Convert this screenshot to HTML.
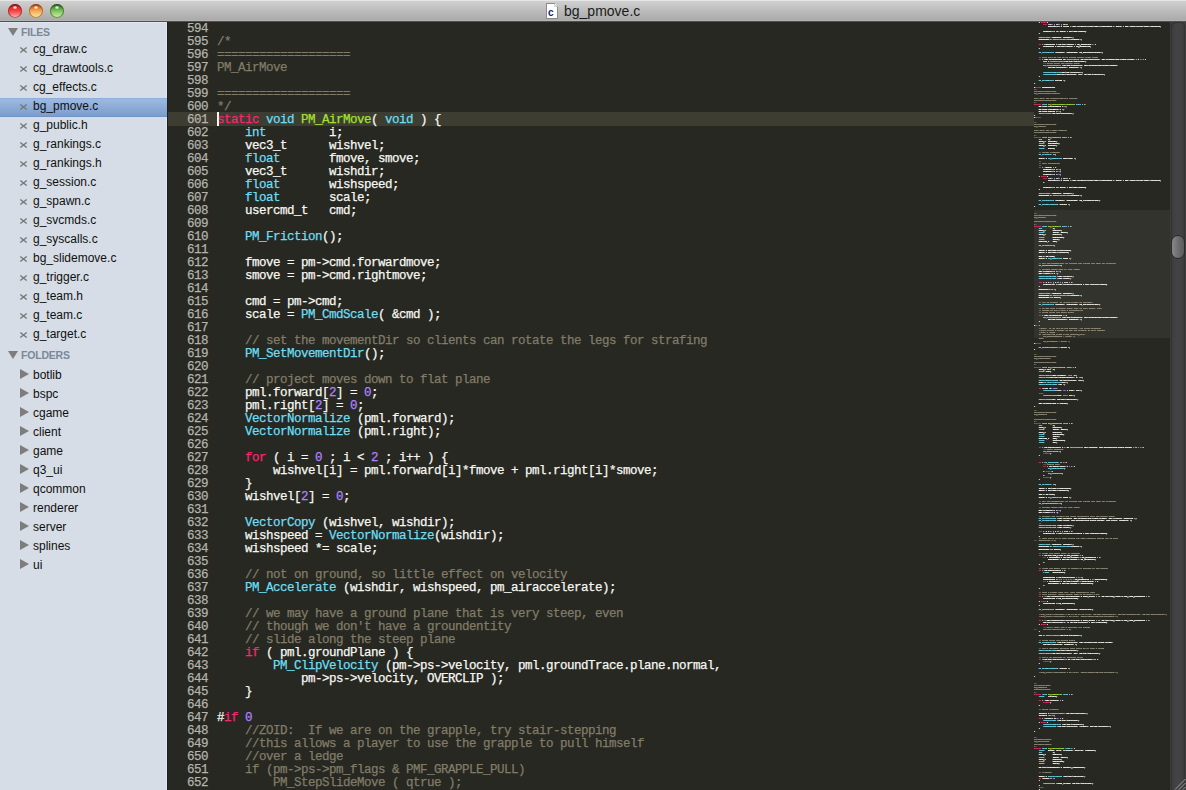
<!DOCTYPE html>
<html><head><meta charset="utf-8">
<style>
*{margin:0;padding:0;box-sizing:border-box}
html,body{width:1186px;height:790px;overflow:hidden;background:#272822}
body{position:relative;font-family:"Liberation Sans",sans-serif}
#title{position:absolute;left:0;top:0;width:1186px;height:22px;
 background:linear-gradient(#e6e6e6 0px,#e6e6e6 1px,#d0d0d0 1px,#aaaaaa 20px,#b3b3b3 20px,#b3b3b3 21px,#505050 21px,#505050 22px)}
.tl{position:absolute;top:4px;width:14px;height:14px;border-radius:50%}
#t-r{left:8px;background:linear-gradient(#7a1414 0,#d42a2a 22%,#f53c3c 45%,#f87070 70%,#ffc4c4 100%);box-shadow:inset 0 0 0 1px rgba(110,20,20,0.55)}
#t-y{left:29px;background:linear-gradient(#9a3a10 0,#d86a28 22%,#f3a050 45%,#f8c878 70%,#ffe99a 100%);box-shadow:inset 0 0 0 1px rgba(130,60,10,0.55)}
#t-g{left:50px;background:linear-gradient(#245a18 0,#4a9034 22%,#78bc5a 45%,#a4d880 70%,#d4f0a4 100%);box-shadow:inset 0 0 0 1px rgba(30,70,20,0.55)}
.tl::after{content:"";position:absolute;left:5px;top:1.5px;width:4px;height:3px;border-radius:50%;background:radial-gradient(rgba(255,255,255,0.95),rgba(255,255,255,0.3))}
#ttext{position:absolute;left:564px;top:3px;font-size:14px;color:#1a1a1a;letter-spacing:0px}
#ticon{position:absolute;left:546px;top:3px;width:12px;height:16px;background:#fff;border:1px solid #8a8a8a;clip-path:polygon(0 0,70% 0,100% 25%,100% 100%,0 100%)}
#ticon::after{content:"";position:absolute;right:-1px;top:-1px;width:4px;height:4px;background:linear-gradient(225deg,transparent 50%,#9a9a9a 50%,#e0e0e0 70%)}
#ticon b{position:absolute;left:1px;top:3px;font:bold 10px "Liberation Sans",sans-serif;color:#14207a}
#side{position:absolute;left:0;top:22px;width:168px;height:768px;background:#d6dde6;border-top:1px solid #e2e7ee}
#side::after{content:"";position:absolute;right:0;top:-1px;width:1px;height:769px;background:#1e1e1a}
#side::before{content:"";position:absolute;right:1px;top:0;width:1px;height:768px;background:#e0e6ee}
.hd{position:absolute;left:21px;font:bold 10.5px "Liberation Sans",sans-serif;color:#7b8898;letter-spacing:-0.2px}
.tri{position:absolute;left:8px;width:0;height:0;border-left:5px solid transparent;border-right:5px solid transparent;border-top:8px solid #7d7d7d}
.it{position:absolute;left:33px;font-size:12px;color:#101010;height:19px;line-height:19px}
.xs{position:absolute;left:19px}
.x{position:absolute;left:19px;font-size:14px;color:#6a6a6a;line-height:19px}
.ft{position:absolute;left:20px;width:0;height:0;border-top:5px solid transparent;border-bottom:5px solid transparent;border-left:9px solid #7d7d7d}
.sel{position:absolute;left:0;top:98px;width:167px;height:19px;background:linear-gradient(#9cb9e0,#7c9dcd);border-top:1px solid #8eaedb;border-bottom:1px solid #6f93c6}
#ed{position:absolute;left:168px;top:22px;width:1018px;height:768px;background:#272822;overflow:hidden}
#hl{position:absolute;left:168px;top:112px;width:866px;height:14px;background:#3e3d32}
#caret{position:absolute;left:217px;top:112px;width:2px;height:14px;background:#f8f8f0}
.ln,.no{position:absolute;height:13px;line-height:13px;white-space:pre;font-family:"Liberation Mono",monospace;font-size:12.5px;letter-spacing:-0.5px;color:#f8f8f2;-webkit-text-stroke:0.25px currentColor}
.ln{left:217px}
.no{left:167px;width:41px;text-align:right;color:#b4b4ac}
.cm{color:#827c67}.kw{color:#f92672}.ty{color:#6cdff4}.fn{color:#a6e22e}.call{color:#6cdff4}.num{color:#ae81ff}
#mmv{position:absolute;left:1034px;top:210px;width:136px;height:128px;background:#33332d}
#mm i{position:absolute;height:1.6px;opacity:0.55;background:#f8f8f2}
#mm i.cm{background:#75715e}#mm i.kw{background:#f92672}#mm i.ty,#mm i.call{background:#66d9ef}#mm i.fn{background:#a6e22e}#mm i.num{background:#ae81ff}
#mmclip{position:absolute;left:1034px;top:22px;width:136px;height:768px;overflow:hidden}
#mmt{position:absolute;left:0;top:187.5px;width:900px;height:0;transform:scale(0.16667);transform-origin:0 0}
.mln{position:absolute;left:0;height:13px;line-height:13px;white-space:pre;font-family:"Liberation Mono",monospace;font-size:12.5px;letter-spacing:-0.5px;color:#f8f8f2;font-weight:bold;-webkit-text-stroke:1.2px currentColor}
.mln .cm{color:#9a9480}
#sb{position:absolute;left:1170px;top:22px;width:16px;height:768px;background:linear-gradient(90deg,#3a3a3a,#444 50%,#3e3e3e)}
#groove{position:absolute;left:1171px;top:22px;width:14px;height:772px;border-radius:5px 5px 0 0;background:linear-gradient(90deg,#3c3c3c,#434343 40%,#424242 70%,#3a3a3a);box-shadow:inset 1px 1px 0 #333,inset -1px 0 0 #333}
#thumb{position:absolute;left:1171px;top:235px;width:14px;height:24px;border-radius:7px;background:linear-gradient(90deg,#888,#6a6a6a 60%,#5a5a5a);border:1px solid #2a2a2a}
</style></head><body>
<div id="title">
 <div class="tl" id="t-r"></div><div class="tl" id="t-y"></div><div class="tl" id="t-g"></div>
 <div id="ticon"><b>c</b></div>
 <div id="ttext">bg_pmove.c</div>
</div>
<div id="side">
</div>
<div class="sel"></div>
<div id="sideitems">
<div class="tri" style="top:28px"></div><div class="hd" style="top:26px">FILES</div>
<svg class="xs" style="top:46px" width="9" height="8"><path d="M1.3 1.5L7.7 6.5M7.7 1.5L1.3 6.5" stroke="#777" stroke-width="1.4"/></svg><div class="it" style="top:40px">cg_draw.c</div>
<svg class="xs" style="top:65px" width="9" height="8"><path d="M1.3 1.5L7.7 6.5M7.7 1.5L1.3 6.5" stroke="#777" stroke-width="1.4"/></svg><div class="it" style="top:59px">cg_drawtools.c</div>
<svg class="xs" style="top:84px" width="9" height="8"><path d="M1.3 1.5L7.7 6.5M7.7 1.5L1.3 6.5" stroke="#777" stroke-width="1.4"/></svg><div class="it" style="top:78px">cg_effects.c</div>
<svg class="xs" style="top:103px" width="9" height="8"><path d="M1.3 1.5L7.7 6.5M7.7 1.5L1.3 6.5" stroke="#777" stroke-width="1.4"/></svg><div class="it" style="top:97px">bg_pmove.c</div>
<svg class="xs" style="top:122px" width="9" height="8"><path d="M1.3 1.5L7.7 6.5M7.7 1.5L1.3 6.5" stroke="#777" stroke-width="1.4"/></svg><div class="it" style="top:116px">g_public.h</div>
<svg class="xs" style="top:141px" width="9" height="8"><path d="M1.3 1.5L7.7 6.5M7.7 1.5L1.3 6.5" stroke="#777" stroke-width="1.4"/></svg><div class="it" style="top:135px">g_rankings.c</div>
<svg class="xs" style="top:160px" width="9" height="8"><path d="M1.3 1.5L7.7 6.5M7.7 1.5L1.3 6.5" stroke="#777" stroke-width="1.4"/></svg><div class="it" style="top:154px">g_rankings.h</div>
<svg class="xs" style="top:179px" width="9" height="8"><path d="M1.3 1.5L7.7 6.5M7.7 1.5L1.3 6.5" stroke="#777" stroke-width="1.4"/></svg><div class="it" style="top:173px">g_session.c</div>
<svg class="xs" style="top:198px" width="9" height="8"><path d="M1.3 1.5L7.7 6.5M7.7 1.5L1.3 6.5" stroke="#777" stroke-width="1.4"/></svg><div class="it" style="top:192px">g_spawn.c</div>
<svg class="xs" style="top:217px" width="9" height="8"><path d="M1.3 1.5L7.7 6.5M7.7 1.5L1.3 6.5" stroke="#777" stroke-width="1.4"/></svg><div class="it" style="top:211px">g_svcmds.c</div>
<svg class="xs" style="top:236px" width="9" height="8"><path d="M1.3 1.5L7.7 6.5M7.7 1.5L1.3 6.5" stroke="#777" stroke-width="1.4"/></svg><div class="it" style="top:230px">g_syscalls.c</div>
<svg class="xs" style="top:255px" width="9" height="8"><path d="M1.3 1.5L7.7 6.5M7.7 1.5L1.3 6.5" stroke="#777" stroke-width="1.4"/></svg><div class="it" style="top:249px">bg_slidemove.c</div>
<svg class="xs" style="top:274px" width="9" height="8"><path d="M1.3 1.5L7.7 6.5M7.7 1.5L1.3 6.5" stroke="#777" stroke-width="1.4"/></svg><div class="it" style="top:268px">g_trigger.c</div>
<svg class="xs" style="top:293px" width="9" height="8"><path d="M1.3 1.5L7.7 6.5M7.7 1.5L1.3 6.5" stroke="#777" stroke-width="1.4"/></svg><div class="it" style="top:287px">g_team.h</div>
<svg class="xs" style="top:312px" width="9" height="8"><path d="M1.3 1.5L7.7 6.5M7.7 1.5L1.3 6.5" stroke="#777" stroke-width="1.4"/></svg><div class="it" style="top:306px">g_team.c</div>
<svg class="xs" style="top:331px" width="9" height="8"><path d="M1.3 1.5L7.7 6.5M7.7 1.5L1.3 6.5" stroke="#777" stroke-width="1.4"/></svg><div class="it" style="top:325px">g_target.c</div>
<div class="tri" style="top:351px"></div><div class="hd" style="top:349px">FOLDERS</div>
<div class="ft" style="top:369px"></div><div class="it" style="top:366px">botlib</div>
<div class="ft" style="top:388px"></div><div class="it" style="top:385px">bspc</div>
<div class="ft" style="top:407px"></div><div class="it" style="top:404px">cgame</div>
<div class="ft" style="top:426px"></div><div class="it" style="top:423px">client</div>
<div class="ft" style="top:445px"></div><div class="it" style="top:442px">game</div>
<div class="ft" style="top:464px"></div><div class="it" style="top:461px">q3_ui</div>
<div class="ft" style="top:483px"></div><div class="it" style="top:480px">qcommon</div>
<div class="ft" style="top:502px"></div><div class="it" style="top:499px">renderer</div>
<div class="ft" style="top:521px"></div><div class="it" style="top:518px">server</div>
<div class="ft" style="top:540px"></div><div class="it" style="top:537px">splines</div>
<div class="ft" style="top:559px"></div><div class="it" style="top:556px">ui</div>
</div>
<div id="ed"></div>
<div id="mmv"></div>
<div id="hl"></div>
<div id="code">
<div class="no" style="top:23px">594</div>
<div class="no" style="top:36px">595</div>
<div class="no" style="top:49px">596</div>
<div class="no" style="top:62px">597</div>
<div class="no" style="top:75px">598</div>
<div class="no" style="top:88px">599</div>
<div class="no" style="top:101px">600</div>
<div class="no" style="top:114px">601</div>
<div class="no" style="top:127px">602</div>
<div class="no" style="top:140px">603</div>
<div class="no" style="top:153px">604</div>
<div class="no" style="top:166px">605</div>
<div class="no" style="top:179px">606</div>
<div class="no" style="top:192px">607</div>
<div class="no" style="top:205px">608</div>
<div class="no" style="top:218px">609</div>
<div class="no" style="top:231px">610</div>
<div class="no" style="top:244px">611</div>
<div class="no" style="top:257px">612</div>
<div class="no" style="top:270px">613</div>
<div class="no" style="top:283px">614</div>
<div class="no" style="top:296px">615</div>
<div class="no" style="top:309px">616</div>
<div class="no" style="top:322px">617</div>
<div class="no" style="top:335px">618</div>
<div class="no" style="top:348px">619</div>
<div class="no" style="top:361px">620</div>
<div class="no" style="top:374px">621</div>
<div class="no" style="top:387px">622</div>
<div class="no" style="top:400px">623</div>
<div class="no" style="top:413px">624</div>
<div class="no" style="top:426px">625</div>
<div class="no" style="top:439px">626</div>
<div class="no" style="top:452px">627</div>
<div class="no" style="top:465px">628</div>
<div class="no" style="top:478px">629</div>
<div class="no" style="top:491px">630</div>
<div class="no" style="top:504px">631</div>
<div class="no" style="top:517px">632</div>
<div class="no" style="top:530px">633</div>
<div class="no" style="top:543px">634</div>
<div class="no" style="top:556px">635</div>
<div class="no" style="top:569px">636</div>
<div class="no" style="top:582px">637</div>
<div class="no" style="top:595px">638</div>
<div class="no" style="top:608px">639</div>
<div class="no" style="top:621px">640</div>
<div class="no" style="top:634px">641</div>
<div class="no" style="top:647px">642</div>
<div class="no" style="top:660px">643</div>
<div class="no" style="top:673px">644</div>
<div class="no" style="top:686px">645</div>
<div class="no" style="top:699px">646</div>
<div class="no" style="top:712px">647</div>
<div class="no" style="top:725px">648</div>
<div class="no" style="top:738px">649</div>
<div class="no" style="top:751px">650</div>
<div class="no" style="top:764px">651</div>
<div class="no" style="top:777px">652</div>
<div class="no" style="top:790px">653</div>
<div class="ln" style="top:23px"></div>
<div class="ln" style="top:36px"><span class="cm">/*</span></div>
<div class="ln" style="top:49px"><span class="cm">===================</span></div>
<div class="ln" style="top:62px"><span class="cm">PM_AirMove</span></div>
<div class="ln" style="top:75px"></div>
<div class="ln" style="top:88px"><span class="cm">===================</span></div>
<div class="ln" style="top:101px"><span class="cm">*/</span></div>
<div class="ln" style="top:114px"><span class="kw">static </span><span class="ty">void </span><span class="fn">PM_AirMove</span>( <span class="ty">void </span>) {</div>
<div class="ln" style="top:127px">    <span class="ty">int         </span>i;</div>
<div class="ln" style="top:140px">    vec3_t      wishvel;</div>
<div class="ln" style="top:153px">    <span class="ty">float       </span>fmove, smove;</div>
<div class="ln" style="top:166px">    vec3_t      wishdir;</div>
<div class="ln" style="top:179px">    <span class="ty">float       </span>wishspeed;</div>
<div class="ln" style="top:192px">    <span class="ty">float       </span>scale;</div>
<div class="ln" style="top:205px">    usercmd_t   cmd;</div>
<div class="ln" style="top:218px"></div>
<div class="ln" style="top:231px">    <span class="call">PM_Friction</span>();</div>
<div class="ln" style="top:244px"></div>
<div class="ln" style="top:257px">    fmove = pm-&gt;cmd.forwardmove;</div>
<div class="ln" style="top:270px">    smove = pm-&gt;cmd.rightmove;</div>
<div class="ln" style="top:283px"></div>
<div class="ln" style="top:296px">    cmd = pm-&gt;cmd;</div>
<div class="ln" style="top:309px">    scale = <span class="call">PM_CmdScale</span>( &amp;cmd );</div>
<div class="ln" style="top:322px"></div>
<div class="ln" style="top:335px">    <span class="cm">// set the movementDir so clients can rotate the legs for strafing</span></div>
<div class="ln" style="top:348px">    <span class="call">PM_SetMovementDir</span>();</div>
<div class="ln" style="top:361px"></div>
<div class="ln" style="top:374px">    <span class="cm">// project moves down to flat plane</span></div>
<div class="ln" style="top:387px">    pml.forward[<span class="num">2</span>] = <span class="num">0</span>;</div>
<div class="ln" style="top:400px">    pml.right[<span class="num">2</span>] = <span class="num">0</span>;</div>
<div class="ln" style="top:413px">    <span class="call">VectorNormalize </span>(pml.forward);</div>
<div class="ln" style="top:426px">    <span class="call">VectorNormalize </span>(pml.right);</div>
<div class="ln" style="top:439px"></div>
<div class="ln" style="top:452px">    <span class="kw">for </span>( i = <span class="num">0 </span>; i &lt; <span class="num">2 </span>; i++ ) {</div>
<div class="ln" style="top:465px">        wishvel[i] = pml.forward[i]*fmove + pml.right[i]*smove;</div>
<div class="ln" style="top:478px">    }</div>
<div class="ln" style="top:491px">    wishvel[<span class="num">2</span>] = <span class="num">0</span>;</div>
<div class="ln" style="top:504px"></div>
<div class="ln" style="top:517px">    <span class="call">VectorCopy </span>(wishvel, wishdir);</div>
<div class="ln" style="top:530px">    wishspeed = <span class="call">VectorNormalize</span>(wishdir);</div>
<div class="ln" style="top:543px">    wishspeed *= scale;</div>
<div class="ln" style="top:556px"></div>
<div class="ln" style="top:569px">    <span class="cm">// not on ground, so little effect on velocity</span></div>
<div class="ln" style="top:582px">    <span class="call">PM_Accelerate </span>(wishdir, wishspeed, pm_airaccelerate);</div>
<div class="ln" style="top:595px"></div>
<div class="ln" style="top:608px">    <span class="cm">// we may have a ground plane that is very steep, even</span></div>
<div class="ln" style="top:621px">    <span class="cm">// though we don&#x27;t have a groundentity</span></div>
<div class="ln" style="top:634px">    <span class="cm">// slide along the steep plane</span></div>
<div class="ln" style="top:647px">    <span class="kw">if </span>( pml.groundPlane ) {</div>
<div class="ln" style="top:660px">        <span class="call">PM_ClipVelocity </span>(pm-&gt;ps-&gt;velocity, pml.groundTrace.plane.normal, </div>
<div class="ln" style="top:673px">            pm-&gt;ps-&gt;velocity, OVERCLIP );</div>
<div class="ln" style="top:686px">    }</div>
<div class="ln" style="top:699px"></div>
<div class="ln" style="top:712px">#<span class="kw">if </span><span class="num">0</span></div>
<div class="ln" style="top:725px"><span class="cm">    //ZOID:  If we are on the grapple, try stair-stepping</span></div>
<div class="ln" style="top:738px"><span class="cm">    //this allows a player to use the grapple to pull himself</span></div>
<div class="ln" style="top:751px"><span class="cm">    //over a ledge</span></div>
<div class="ln" style="top:764px"><span class="cm">    if (pm-&gt;ps-&gt;pm_flags &amp; PMF_GRAPPLE_PULL)</span></div>
<div class="ln" style="top:777px"><span class="cm">        PM_StepSlideMove ( qtrue );</span></div>
<div class="ln" style="top:790px"><span class="cm">    else</span></div>
</div>
<div id="caret"></div>
<div id="mm"><div id="mmclip"><div id="mmt"><div class="mln" style="top:-1157.00px">        wishvel[<span class="num">1</span>] = <span class="num">0</span>;</div><div class="mln" style="top:-1144.00px">        wishvel[<span class="num">2</span>] = -<span class="num">60</span>;       <span class="cm">// sink towards bottom</span></div><div class="mln" style="top:-1131.00px">    } <span class="kw">else </span>{</div><div class="mln" style="top:-1118.00px">        <span class="kw">for </span>(i=<span class="num">0 </span>; i&lt;<span class="num">3 </span>; i++)</div><div class="mln" style="top:-1105.00px">            wishvel[i] = scale * pml.forward[i]*pm-&gt;cmd.forwardmove + scale * pml.right[i]*pm-&gt;cmd.rightmove;</div><div class="mln" style="top:-1092.00px"></div><div class="mln" style="top:-1079.00px">        wishvel[<span class="num">2</span>] += scale * pm-&gt;cmd.upmove;</div><div class="mln" style="top:-1066.00px">    }</div><div class="mln" style="top:-1053.00px"></div><div class="mln" style="top:-1040.00px">    <span class="call">VectorCopy </span>(wishvel, wishdir);</div><div class="mln" style="top:-1027.00px">    wishspeed = <span class="call">VectorNormalize</span>(wishdir);</div><div class="mln" style="top:-1014.00px"></div><div class="mln" style="top:-1001.00px">    <span class="kw">if </span>( wishspeed &gt; pm-&gt;ps-&gt;speed * pm_swimScale ) {</div><div class="mln" style="top:-988.00px">        wishspeed = pm-&gt;ps-&gt;speed * pm_swimScale;</div><div class="mln" style="top:-975.00px">    }</div><div class="mln" style="top:-962.00px"></div><div class="mln" style="top:-949.00px">    <span class="call">PM_Accelerate </span>(wishdir, wishspeed, pm_wateraccelerate);</div><div class="mln" style="top:-936.00px"></div><div class="mln" style="top:-923.00px">    <span class="cm">// make sure we can go up slopes easily under water</span></div><div class="mln" style="top:-910.00px">    <span class="kw">if </span>( pml.groundPlane &amp;&amp; <span class="call">DotProduct</span>( pm-&gt;ps-&gt;velocity, pml.groundTrace.plane.normal ) &lt; <span class="num">0 </span>) {</div><div class="mln" style="top:-897.00px">        vel = <span class="call">VectorLength</span>(pm-&gt;ps-&gt;velocity);</div><div class="mln" style="top:-884.00px">        <span class="cm">// slide along the ground plane</span></div><div class="mln" style="top:-871.00px">        <span class="call">PM_ClipVelocity </span>(pm-&gt;ps-&gt;velocity, pml.groundTrace.plane.normal, </div><div class="mln" style="top:-858.00px">            pm-&gt;ps-&gt;velocity, OVERCLIP );</div><div class="mln" style="top:-845.00px"></div><div class="mln" style="top:-832.00px">        <span class="call">VectorNormalize</span>(pm-&gt;ps-&gt;velocity);</div><div class="mln" style="top:-819.00px">        <span class="call">VectorScale</span>(pm-&gt;ps-&gt;velocity, vel, pm-&gt;ps-&gt;velocity);</div><div class="mln" style="top:-806.00px">    }</div><div class="mln" style="top:-793.00px"></div><div class="mln" style="top:-780.00px">    <span class="call">PM_SlideMove</span>( qfalse );</div><div class="mln" style="top:-767.00px">}</div><div class="mln" style="top:-754.00px"></div><div class="mln" style="top:-741.00px">#<span class="kw">ifdef </span>MISSIONPACK</div><div class="mln" style="top:-728.00px"><span class="cm">/*</span></div><div class="mln" style="top:-715.00px"><span class="cm">===================</span></div><div class="mln" style="top:-702.00px"><span class="cm">PM_InvulnerabilityMove</span></div><div class="mln" style="top:-689.00px"></div><div class="mln" style="top:-676.00px"><span class="cm">Only with the invulnerability powerup</span></div><div class="mln" style="top:-663.00px"><span class="cm">===================</span></div><div class="mln" style="top:-650.00px"><span class="cm">*/</span></div><div class="mln" style="top:-637.00px"><span class="kw">static </span><span class="ty">void </span><span class="fn">PM_InvulnerabilityMove</span>( <span class="ty">void </span>) {</div><div class="mln" style="top:-624.00px">    pm-&gt;cmd.forwardmove = <span class="num">0</span>;</div><div class="mln" style="top:-611.00px">    pm-&gt;cmd.rightmove = <span class="num">0</span>;</div><div class="mln" style="top:-598.00px">    pm-&gt;cmd.upmove = <span class="num">0</span>;</div><div class="mln" style="top:-585.00px">    <span class="call">VectorClear</span>(pm-&gt;ps-&gt;velocity);</div><div class="mln" style="top:-572.00px">}</div><div class="mln" style="top:-559.00px">#<span class="kw">endif</span></div><div class="mln" style="top:-546.00px"></div><div class="mln" style="top:-533.00px"><span class="cm">/*</span></div><div class="mln" style="top:-520.00px"><span class="cm">===================</span></div><div class="mln" style="top:-507.00px"><span class="cm">PM_FlyMove</span></div><div class="mln" style="top:-494.00px"></div><div class="mln" style="top:-481.00px"><span class="cm">Only with the flight powerup</span></div><div class="mln" style="top:-468.00px"><span class="cm">===================</span></div><div class="mln" style="top:-455.00px"><span class="cm">*/</span></div><div class="mln" style="top:-442.00px"><span class="kw">static </span><span class="ty">void </span><span class="fn">PM_FlyMove</span>( <span class="ty">void </span>) {</div><div class="mln" style="top:-429.00px">    <span class="ty">int     </span>i;</div><div class="mln" style="top:-416.00px">    vec3_t  wishvel;</div><div class="mln" style="top:-403.00px">    <span class="ty">float   </span>wishspeed;</div><div class="mln" style="top:-390.00px">    vec3_t  wishdir;</div><div class="mln" style="top:-377.00px">    <span class="ty">float   </span>scale;</div><div class="mln" style="top:-364.00px"></div><div class="mln" style="top:-351.00px">    <span class="cm">// normal slowdown</span></div><div class="mln" style="top:-338.00px">    <span class="call">PM_Friction </span>();</div><div class="mln" style="top:-325.00px"></div><div class="mln" style="top:-312.00px">    scale = <span class="call">PM_CmdScale</span>( &amp;pm-&gt;cmd );</div><div class="mln" style="top:-299.00px">    <span class="cm">//</span></div><div class="mln" style="top:-286.00px">    <span class="cm">// user intentions</span></div><div class="mln" style="top:-273.00px">    <span class="cm">//</span></div><div class="mln" style="top:-260.00px">    <span class="kw">if </span>( !scale ) {</div><div class="mln" style="top:-247.00px">        wishvel[<span class="num">0</span>] = <span class="num">0</span>;</div><div class="mln" style="top:-234.00px">        wishvel[<span class="num">1</span>] = <span class="num">0</span>;</div><div class="mln" style="top:-221.00px">        wishvel[<span class="num">2</span>] = <span class="num">0</span>;</div><div class="mln" style="top:-208.00px">    } <span class="kw">else </span>{</div><div class="mln" style="top:-195.00px">        <span class="kw">for </span>(i=<span class="num">0 </span>; i&lt;<span class="num">3 </span>; i++) {</div><div class="mln" style="top:-182.00px">            wishvel[i] = scale * pml.forward[i]*pm-&gt;cmd.forwardmove + scale * pml.right[i]*pm-&gt;cmd.rightmove;</div><div class="mln" style="top:-169.00px">        }</div><div class="mln" style="top:-156.00px"></div><div class="mln" style="top:-143.00px">        wishvel[<span class="num">2</span>] += scale * pm-&gt;cmd.upmove;</div><div class="mln" style="top:-130.00px">    }</div><div class="mln" style="top:-117.00px"></div><div class="mln" style="top:-104.00px">    <span class="call">VectorCopy </span>(wishvel, wishdir);</div><div class="mln" style="top:-91.00px">    wishspeed = <span class="call">VectorNormalize</span>(wishdir);</div><div class="mln" style="top:-78.00px"></div><div class="mln" style="top:-65.00px">    <span class="call">PM_Accelerate </span>(wishdir, wishspeed, pm_flyaccelerate);</div><div class="mln" style="top:-52.00px"></div><div class="mln" style="top:-39.00px">    <span class="call">PM_StepSlideMove</span>( qfalse );</div><div class="mln" style="top:-26.00px">}</div><div class="mln" style="top:-13.00px"></div><div class="mln" style="top:0.00px"></div><div class="mln" style="top:13.00px"><span class="cm">/*</span></div><div class="mln" style="top:26.00px"><span class="cm">===================</span></div><div class="mln" style="top:39.00px"><span class="cm">PM_AirMove</span></div><div class="mln" style="top:52.00px"></div><div class="mln" style="top:65.00px"><span class="cm">===================</span></div><div class="mln" style="top:78.00px"><span class="cm">*/</span></div><div class="mln" style="top:91.00px"><span class="kw">static </span><span class="ty">void </span><span class="fn">PM_AirMove</span>( <span class="ty">void </span>) {</div><div class="mln" style="top:104.00px">    <span class="ty">int         </span>i;</div><div class="mln" style="top:117.00px">    vec3_t      wishvel;</div><div class="mln" style="top:130.00px">    <span class="ty">float       </span>fmove, smove;</div><div class="mln" style="top:143.00px">    vec3_t      wishdir;</div><div class="mln" style="top:156.00px">    <span class="ty">float       </span>wishspeed;</div><div class="mln" style="top:169.00px">    <span class="ty">float       </span>scale;</div><div class="mln" style="top:182.00px">    usercmd_t   cmd;</div><div class="mln" style="top:195.00px"></div><div class="mln" style="top:208.00px">    <span class="call">PM_Friction</span>();</div><div class="mln" style="top:221.00px"></div><div class="mln" style="top:234.00px">    fmove = pm-&gt;cmd.forwardmove;</div><div class="mln" style="top:247.00px">    smove = pm-&gt;cmd.rightmove;</div><div class="mln" style="top:260.00px"></div><div class="mln" style="top:273.00px">    cmd = pm-&gt;cmd;</div><div class="mln" style="top:286.00px">    scale = <span class="call">PM_CmdScale</span>( &amp;cmd );</div><div class="mln" style="top:299.00px"></div><div class="mln" style="top:312.00px">    <span class="cm">// set the movementDir so clients can rotate the legs for strafing</span></div><div class="mln" style="top:325.00px">    <span class="call">PM_SetMovementDir</span>();</div><div class="mln" style="top:338.00px"></div><div class="mln" style="top:351.00px">    <span class="cm">// project moves down to flat plane</span></div><div class="mln" style="top:364.00px">    pml.forward[<span class="num">2</span>] = <span class="num">0</span>;</div><div class="mln" style="top:377.00px">    pml.right[<span class="num">2</span>] = <span class="num">0</span>;</div><div class="mln" style="top:390.00px">    <span class="call">VectorNormalize </span>(pml.forward);</div><div class="mln" style="top:403.00px">    <span class="call">VectorNormalize </span>(pml.right);</div><div class="mln" style="top:416.00px"></div><div class="mln" style="top:429.00px">    <span class="kw">for </span>( i = <span class="num">0 </span>; i &lt; <span class="num">2 </span>; i++ ) {</div><div class="mln" style="top:442.00px">        wishvel[i] = pml.forward[i]*fmove + pml.right[i]*smove;</div><div class="mln" style="top:455.00px">    }</div><div class="mln" style="top:468.00px">    wishvel[<span class="num">2</span>] = <span class="num">0</span>;</div><div class="mln" style="top:481.00px"></div><div class="mln" style="top:494.00px">    <span class="call">VectorCopy </span>(wishvel, wishdir);</div><div class="mln" style="top:507.00px">    wishspeed = <span class="call">VectorNormalize</span>(wishdir);</div><div class="mln" style="top:520.00px">    wishspeed *= scale;</div><div class="mln" style="top:533.00px"></div><div class="mln" style="top:546.00px">    <span class="cm">// not on ground, so little effect on velocity</span></div><div class="mln" style="top:559.00px">    <span class="call">PM_Accelerate </span>(wishdir, wishspeed, pm_airaccelerate);</div><div class="mln" style="top:572.00px"></div><div class="mln" style="top:585.00px">    <span class="cm">// we may have a ground plane that is very steep, even</span></div><div class="mln" style="top:598.00px">    <span class="cm">// though we don&#x27;t have a groundentity</span></div><div class="mln" style="top:611.00px">    <span class="cm">// slide along the steep plane</span></div><div class="mln" style="top:624.00px">    <span class="kw">if </span>( pml.groundPlane ) {</div><div class="mln" style="top:637.00px">        <span class="call">PM_ClipVelocity </span>(pm-&gt;ps-&gt;velocity, pml.groundTrace.plane.normal, </div><div class="mln" style="top:650.00px">            pm-&gt;ps-&gt;velocity, OVERCLIP );</div><div class="mln" style="top:663.00px">    }</div><div class="mln" style="top:676.00px"></div><div class="mln" style="top:689.00px">#<span class="kw">if </span><span class="num">0</span></div><div class="mln" style="top:702.00px"><span class="cm">    //ZOID:  If we are on the grapple, try stair-stepping</span></div><div class="mln" style="top:715.00px"><span class="cm">    //this allows a player to use the grapple to pull himself</span></div><div class="mln" style="top:728.00px"><span class="cm">    //over a ledge</span></div><div class="mln" style="top:741.00px"><span class="cm">    if (pm-&gt;ps-&gt;pm_flags &amp; PMF_GRAPPLE_PULL)</span></div><div class="mln" style="top:754.00px"><span class="cm">        PM_StepSlideMove ( qtrue );</span></div><div class="mln" style="top:767.00px"><span class="cm">    else</span></div><div class="mln" style="top:780.00px"><span class="cm">        PM_SlideMove ( qtrue );</span></div><div class="mln" style="top:793.00px">#<span class="kw">endif</span></div><div class="mln" style="top:806.00px"></div><div class="mln" style="top:819.00px">    <span class="call">PM_StepSlideMove </span>( qtrue );</div><div class="mln" style="top:832.00px">}</div><div class="mln" style="top:845.00px"></div><div class="mln" style="top:858.00px"><span class="cm">/*</span></div><div class="mln" style="top:871.00px"><span class="cm">===================</span></div><div class="mln" style="top:884.00px"><span class="cm">PM_GrappleMove</span></div><div class="mln" style="top:897.00px"></div><div class="mln" style="top:910.00px"><span class="cm">===================</span></div><div class="mln" style="top:923.00px"><span class="cm">*/</span></div><div class="mln" style="top:936.00px"><span class="kw">static </span><span class="ty">void </span><span class="fn">PM_GrappleMove</span>( <span class="ty">void </span>) {</div><div class="mln" style="top:949.00px">    vec3_t vel, v;</div><div class="mln" style="top:962.00px">    <span class="ty">float </span>vlen;</div><div class="mln" style="top:975.00px"></div><div class="mln" style="top:988.00px">    <span class="call">VectorScale</span>(pml.forward, -<span class="num">16</span>, v);</div><div class="mln" style="top:1001.00px">    <span class="call">VectorAdd</span>(pm-&gt;ps-&gt;grapplePoint, v, v);</div><div class="mln" style="top:1014.00px">    <span class="call">VectorSubtract</span>(v, pm-&gt;ps-&gt;origin, vel);</div><div class="mln" style="top:1027.00px">    vlen = <span class="call">VectorLength</span>(vel);</div><div class="mln" style="top:1040.00px">    <span class="call">VectorNormalize</span>( vel );</div><div class="mln" style="top:1053.00px"></div><div class="mln" style="top:1066.00px">    <span class="kw">if </span>(vlen &lt;= <span class="num">100</span>)</div><div class="mln" style="top:1079.00px">        <span class="call">VectorScale</span>(vel, <span class="num">10 </span>* vlen, vel);</div><div class="mln" style="top:1092.00px">    <span class="kw">else</span></div><div class="mln" style="top:1105.00px">        <span class="call">VectorScale</span>(vel, <span class="num">800</span>, vel);</div><div class="mln" style="top:1118.00px"></div><div class="mln" style="top:1131.00px">    <span class="call">VectorCopy</span>(vel, pm-&gt;ps-&gt;velocity);</div><div class="mln" style="top:1144.00px"></div><div class="mln" style="top:1157.00px">    pml.groundPlane = qfalse;</div><div class="mln" style="top:1170.00px">}</div><div class="mln" style="top:1183.00px"></div><div class="mln" style="top:1196.00px"><span class="cm">/*</span></div><div class="mln" style="top:1209.00px"><span class="cm">===================</span></div><div class="mln" style="top:1222.00px"><span class="cm">PM_WalkMove</span></div><div class="mln" style="top:1235.00px"></div><div class="mln" style="top:1248.00px"><span class="cm">===================</span></div><div class="mln" style="top:1261.00px"><span class="cm">*/</span></div><div class="mln" style="top:1274.00px"><span class="kw">static </span><span class="ty">void </span><span class="fn">PM_WalkMove</span>( <span class="ty">void </span>) {</div><div class="mln" style="top:1287.00px">    <span class="ty">int         </span>i;</div><div class="mln" style="top:1300.00px">    vec3_t      wishvel;</div><div class="mln" style="top:1313.00px">    <span class="ty">float       </span>fmove, smove;</div><div class="mln" style="top:1326.00px">    vec3_t      wishdir;</div><div class="mln" style="top:1339.00px">    <span class="ty">float       </span>wishspeed;</div><div class="mln" style="top:1352.00px">    <span class="ty">float       </span>scale;</div><div class="mln" style="top:1365.00px">    usercmd_t   cmd;</div><div class="mln" style="top:1378.00px">    <span class="ty">float       </span>accelerate;</div><div class="mln" style="top:1391.00px">    <span class="ty">float       </span>vel;</div><div class="mln" style="top:1404.00px"></div><div class="mln" style="top:1417.00px">    <span class="kw">if </span>( pm-&gt;waterlevel &gt; <span class="num">2 </span>&amp;&amp; <span class="call">DotProduct</span>( pml.forward, pml.groundTrace.plane.normal ) &gt; <span class="num">0 </span>) {</div><div class="mln" style="top:1430.00px">        <span class="cm">// begin swimming</span></div><div class="mln" style="top:1443.00px">        <span class="call">PM_WaterMove</span>();</div><div class="mln" style="top:1456.00px">        <span class="kw">return</span>;</div><div class="mln" style="top:1469.00px">    }</div><div class="mln" style="top:1482.00px"></div><div class="mln" style="top:1495.00px"></div><div class="mln" style="top:1508.00px">    <span class="kw">if </span>( <span class="call">PM_CheckJump </span>() ) {</div><div class="mln" style="top:1521.00px">        <span class="cm">// jumped away</span></div><div class="mln" style="top:1534.00px">        <span class="kw">if </span>( pm-&gt;waterlevel &gt; <span class="num">1 </span>) {</div><div class="mln" style="top:1547.00px">            <span class="call">PM_WaterMove</span>();</div><div class="mln" style="top:1560.00px">        } <span class="kw">else </span>{</div><div class="mln" style="top:1573.00px">            <span class="call">PM_AirMove</span>();</div><div class="mln" style="top:1586.00px">        }</div><div class="mln" style="top:1599.00px">        <span class="kw">return</span>;</div><div class="mln" style="top:1612.00px">    }</div><div class="mln" style="top:1625.00px"></div><div class="mln" style="top:1638.00px">    <span class="call">PM_Friction </span>();</div><div class="mln" style="top:1651.00px"></div><div class="mln" style="top:1664.00px">    fmove = pm-&gt;cmd.forwardmove;</div><div class="mln" style="top:1677.00px">    smove = pm-&gt;cmd.rightmove;</div><div class="mln" style="top:1690.00px"></div><div class="mln" style="top:1703.00px">    cmd = pm-&gt;cmd;</div><div class="mln" style="top:1716.00px">    scale = <span class="call">PM_CmdScale</span>( &amp;cmd );</div><div class="mln" style="top:1729.00px"></div><div class="mln" style="top:1742.00px">    <span class="cm">// set the movementDir so clients can rotate the legs for strafing</span></div><div class="mln" style="top:1755.00px">    <span class="call">PM_SetMovementDir</span>();</div><div class="mln" style="top:1768.00px"></div><div class="mln" style="top:1781.00px">    <span class="cm">// project moves down to flat plane</span></div><div class="mln" style="top:1794.00px">    pml.forward[<span class="num">2</span>] = <span class="num">0</span>;</div><div class="mln" style="top:1807.00px">    pml.right[<span class="num">2</span>] = <span class="num">0</span>;</div><div class="mln" style="top:1820.00px"></div><div class="mln" style="top:1833.00px">    <span class="cm">// project the forward and right directions onto the ground plane</span></div><div class="mln" style="top:1846.00px">    <span class="call">PM_ClipVelocity </span>(pml.forward, pml.groundTrace.plane.normal, pml.forward, OVERCLIP );</div><div class="mln" style="top:1859.00px">    <span class="call">PM_ClipVelocity </span>(pml.right, pml.groundTrace.plane.normal, pml.right, OVERCLIP );</div><div class="mln" style="top:1872.00px">    <span class="cm">//</span></div><div class="mln" style="top:1885.00px">    <span class="call">VectorNormalize </span>(pml.forward);</div><div class="mln" style="top:1898.00px">    <span class="call">VectorNormalize </span>(pml.right);</div><div class="mln" style="top:1911.00px"></div><div class="mln" style="top:1924.00px">    <span class="kw">for </span>( i = <span class="num">0 </span>; i &lt; <span class="num">3 </span>; i++ ) {</div><div class="mln" style="top:1937.00px">        wishvel[i] = pml.forward[i]*fmove + pml.right[i]*smove;</div><div class="mln" style="top:1950.00px">    }</div><div class="mln" style="top:1963.00px">    <span class="cm">// when going up or down slopes the wish velocity should Not be zero</span></div><div class="mln" style="top:1976.00px"><span class="cm">//  wishvel[2] = 0;</span></div><div class="mln" style="top:1989.00px"></div><div class="mln" style="top:2002.00px">    <span class="call">VectorCopy </span>(wishvel, wishdir);</div><div class="mln" style="top:2015.00px">    wishspeed = <span class="call">VectorNormalize</span>(wishdir);</div><div class="mln" style="top:2028.00px">    wishspeed *= scale;</div><div class="mln" style="top:2041.00px"></div><div class="mln" style="top:2054.00px">    <span class="cm">// clamp the speed lower if ducking</span></div><div class="mln" style="top:2067.00px">    <span class="kw">if </span>( pm-&gt;ps-&gt;pm_flags &amp; PMF_DUCKED ) {</div><div class="mln" style="top:2080.00px">        <span class="kw">if </span>( wishspeed &gt; pm-&gt;ps-&gt;speed * pm_duckScale ) {</div><div class="mln" style="top:2093.00px">            wishspeed = pm-&gt;ps-&gt;speed * pm_duckScale;</div><div class="mln" style="top:2106.00px">        }</div><div class="mln" style="top:2119.00px">    }</div><div class="mln" style="top:2132.00px"></div><div class="mln" style="top:2145.00px">    <span class="cm">// clamp the speed lower if wading or walking on the bottom</span></div><div class="mln" style="top:2158.00px">    <span class="kw">if </span>( pm-&gt;waterlevel ) {</div><div class="mln" style="top:2171.00px">        <span class="ty">float   </span>waterScale;</div><div class="mln" style="top:2184.00px"></div><div class="mln" style="top:2197.00px">        waterScale = pm-&gt;waterlevel / <span class="num">3.0</span>;</div><div class="mln" style="top:2210.00px">        waterScale = <span class="num">1.0 </span>- ( <span class="num">1.0 </span>- pm_swimScale ) * waterScale;</div><div class="mln" style="top:2223.00px">        <span class="kw">if </span>( wishspeed &gt; pm-&gt;ps-&gt;speed * waterScale ) {</div><div class="mln" style="top:2236.00px">            wishspeed = pm-&gt;ps-&gt;speed * waterScale;</div><div class="mln" style="top:2249.00px">        }</div><div class="mln" style="top:2262.00px">    }</div><div class="mln" style="top:2275.00px"></div><div class="mln" style="top:2288.00px">    <span class="cm">// when a player gets hit, they temporarily lose</span></div><div class="mln" style="top:2301.00px">    <span class="cm">// full control, which allows them to be moved a bit</span></div><div class="mln" style="top:2314.00px">    <span class="kw">if </span>( ( pml.groundTrace.surfaceFlags &amp; SURF_SLICK ) || pm-&gt;ps-&gt;pm_flags &amp; PMF_TIME_KNOCKBACK ) {</div><div class="mln" style="top:2327.00px">        accelerate = pm_airaccelerate;</div><div class="mln" style="top:2340.00px">    } <span class="kw">else </span>{</div><div class="mln" style="top:2353.00px">        accelerate = pm_accelerate;</div><div class="mln" style="top:2366.00px">    }</div><div class="mln" style="top:2379.00px"></div><div class="mln" style="top:2392.00px">    <span class="call">PM_Accelerate </span>(wishdir, wishspeed, accelerate);</div><div class="mln" style="top:2405.00px"></div><div class="mln" style="top:2418.00px">    <span class="cm">//Com_Printf(&quot;velocity = %1.1f %1.1f %1.1f\n&quot;, pm-&gt;ps-&gt;velocity[0], pm-&gt;ps-&gt;velocity[1], pm-&gt;ps-&gt;velocity[2]);</span></div><div class="mln" style="top:2431.00px">    <span class="cm">//Com_Printf(&quot;velocity1 = %1.1f\n&quot;, VectorLength(pm-&gt;ps-&gt;velocity));</span></div><div class="mln" style="top:2444.00px"></div><div class="mln" style="top:2457.00px">    <span class="kw">if </span>( ( pml.groundTrace.surfaceFlags &amp; SURF_SLICK ) || pm-&gt;ps-&gt;pm_flags &amp; PMF_TIME_KNOCKBACK ) {</div><div class="mln" style="top:2470.00px">        pm-&gt;ps-&gt;velocity[<span class="num">2</span>] -= pm-&gt;ps-&gt;gravity * pml.frametime;</div><div class="mln" style="top:2483.00px">    } <span class="kw">else </span>{</div><div class="mln" style="top:2496.00px">        <span class="cm">// don&#x27;t reset the z velocity for slopes</span></div><div class="mln" style="top:2509.00px"><span class="cm">//      pm-&gt;ps-&gt;velocity[2] = 0;</span></div><div class="mln" style="top:2522.00px">    }</div><div class="mln" style="top:2535.00px"></div><div class="mln" style="top:2548.00px">    vel = <span class="call">VectorLength</span>(pm-&gt;ps-&gt;velocity);</div><div class="mln" style="top:2561.00px"></div><div class="mln" style="top:2574.00px">    <span class="cm">// slide along the ground plane</span></div><div class="mln" style="top:2587.00px">    <span class="call">PM_ClipVelocity </span>(pm-&gt;ps-&gt;velocity, pml.groundTrace.plane.normal, </div><div class="mln" style="top:2600.00px">        pm-&gt;ps-&gt;velocity, OVERCLIP );</div><div class="mln" style="top:2613.00px"></div><div class="mln" style="top:2626.00px">    <span class="cm">// don&#x27;t decrease velocity when going up or down a slope</span></div><div class="mln" style="top:2639.00px">    <span class="call">VectorNormalize</span>(pm-&gt;ps-&gt;velocity);</div><div class="mln" style="top:2652.00px">    <span class="call">VectorScale</span>(pm-&gt;ps-&gt;velocity, vel, pm-&gt;ps-&gt;velocity);</div><div class="mln" style="top:2665.00px"></div><div class="mln" style="top:2678.00px">    <span class="cm">// don&#x27;t do anything if standing still</span></div><div class="mln" style="top:2691.00px">    <span class="kw">if </span>(!pm-&gt;ps-&gt;velocity[<span class="num">0</span>] &amp;&amp; !pm-&gt;ps-&gt;velocity[<span class="num">1</span>]) {</div><div class="mln" style="top:2704.00px">        <span class="kw">return</span>;</div><div class="mln" style="top:2717.00px">    }</div><div class="mln" style="top:2730.00px"></div><div class="mln" style="top:2743.00px">    <span class="call">PM_StepSlideMove</span>( qfalse );</div><div class="mln" style="top:2756.00px"></div><div class="mln" style="top:2769.00px">    <span class="cm">//Com_Printf(&quot;velocity2 = %1.1f\n&quot;, VectorLength(pm-&gt;ps-&gt;velocity));</span></div><div class="mln" style="top:2782.00px"></div><div class="mln" style="top:2795.00px">}</div><div class="mln" style="top:2808.00px"></div><div class="mln" style="top:2821.00px"></div><div class="mln" style="top:2834.00px"><span class="cm">/*</span></div><div class="mln" style="top:2847.00px"><span class="cm">==============</span></div><div class="mln" style="top:2860.00px"><span class="cm">PM_DeadMove</span></div><div class="mln" style="top:2873.00px"><span class="cm">==============</span></div><div class="mln" style="top:2886.00px"><span class="cm">*/</span></div><div class="mln" style="top:2899.00px"><span class="kw">static </span><span class="ty">void </span><span class="fn">PM_DeadMove</span>( <span class="ty">void </span>) {</div><div class="mln" style="top:2912.00px">    <span class="ty">float   </span>forward;</div><div class="mln" style="top:2925.00px"></div><div class="mln" style="top:2938.00px">    <span class="kw">if </span>( !pml.walking ) {</div><div class="mln" style="top:2951.00px">        <span class="kw">return</span>;</div><div class="mln" style="top:2964.00px">    }</div><div class="mln" style="top:2977.00px"></div><div class="mln" style="top:2990.00px">    <span class="cm">// extra friction</span></div><div class="mln" style="top:3003.00px"></div><div class="mln" style="top:3016.00px">    forward = <span class="call">VectorLength </span>(pm-&gt;ps-&gt;velocity);</div><div class="mln" style="top:3029.00px">    forward -= <span class="num">20</span>;</div><div class="mln" style="top:3042.00px">    <span class="kw">if </span>( forward &lt;= <span class="num">0 </span>) {</div><div class="mln" style="top:3055.00px">        <span class="call">VectorClear </span>(pm-&gt;ps-&gt;velocity);</div><div class="mln" style="top:3068.00px">    } <span class="kw">else </span>{</div><div class="mln" style="top:3081.00px">        <span class="call">VectorNormalize </span>(pm-&gt;ps-&gt;velocity);</div><div class="mln" style="top:3094.00px">        <span class="call">VectorScale </span>(pm-&gt;ps-&gt;velocity, forward, pm-&gt;ps-&gt;velocity);</div><div class="mln" style="top:3107.00px">    }</div><div class="mln" style="top:3120.00px">}</div><div class="mln" style="top:3133.00px"></div><div class="mln" style="top:3146.00px"></div><div class="mln" style="top:3159.00px"><span class="cm">/*</span></div><div class="mln" style="top:3172.00px"><span class="cm">===============</span></div><div class="mln" style="top:3185.00px"><span class="cm">PM_NoclipMove</span></div><div class="mln" style="top:3198.00px"><span class="cm">===============</span></div><div class="mln" style="top:3211.00px"><span class="cm">*/</span></div><div class="mln" style="top:3224.00px"><span class="kw">static </span><span class="ty">void </span><span class="fn">PM_NoclipMove</span>( <span class="ty">void </span>) {</div><div class="mln" style="top:3237.00px">    <span class="ty">float   </span>speed, drop, friction, control, newspeed;</div><div class="mln" style="top:3250.00px">    <span class="ty">int         </span>i;</div><div class="mln" style="top:3263.00px">    vec3_t      wishvel;</div><div class="mln" style="top:3276.00px">    <span class="ty">float       </span>fmove, smove;</div><div class="mln" style="top:3289.00px">    vec3_t      wishdir;</div><div class="mln" style="top:3302.00px">    <span class="ty">float       </span>wishspeed;</div><div class="mln" style="top:3315.00px">    <span class="ty">float       </span>scale;</div><div class="mln" style="top:3328.00px"></div><div class="mln" style="top:3341.00px">    pm-&gt;ps-&gt;viewheight = DEFAULT_VIEWHEIGHT;</div><div class="mln" style="top:3354.00px"></div><div class="mln" style="top:3367.00px">    <span class="cm">// friction</span></div><div class="mln" style="top:3380.00px"></div><div class="mln" style="top:3393.00px">    speed = <span class="call">VectorLength </span>(pm-&gt;ps-&gt;velocity);</div><div class="mln" style="top:3406.00px">    <span class="kw">if </span>(speed &lt; <span class="num">1</span>)</div><div class="mln" style="top:3419.00px">    {</div><div class="mln" style="top:3432.00px">        <span class="call">VectorCopy </span>(vec3_origin, pm-&gt;ps-&gt;velocity);</div><div class="mln" style="top:3445.00px">    }</div><div class="mln" style="top:3458.00px">    <span class="kw">else</span></div><div class="mln" style="top:3471.00px">    {</div><div class="mln" style="top:3484.00px">        drop = <span class="num">0</span>;</div><div class="mln" style="top:3497.00px"></div><div class="mln" style="top:3510.00px">        friction = pm_friction*<span class="num">1.5</span>; <span class="cm">// extra friction</span></div><div class="mln" style="top:3523.00px">        control = speed &lt; pm_stopspeed ? pm_stopspeed : speed;</div><div class="mln" style="top:3536.00px">        drop += control*friction*pml.frametime;</div></div></div></div>
<div id="sb"></div>
<div id="groove"></div>
<div id="thumb"></div>
<svg id="grip" width="12" height="12" style="position:absolute;left:1174px;top:778px"><g stroke="#9a9a9a" stroke-width="1"><line x1="1" y1="11.5" x2="11.5" y2="1"/><line x1="5" y1="11.5" x2="11.5" y2="5"/><line x1="9" y1="11.5" x2="11.5" y2="9"/></g></svg>
</body></html>
